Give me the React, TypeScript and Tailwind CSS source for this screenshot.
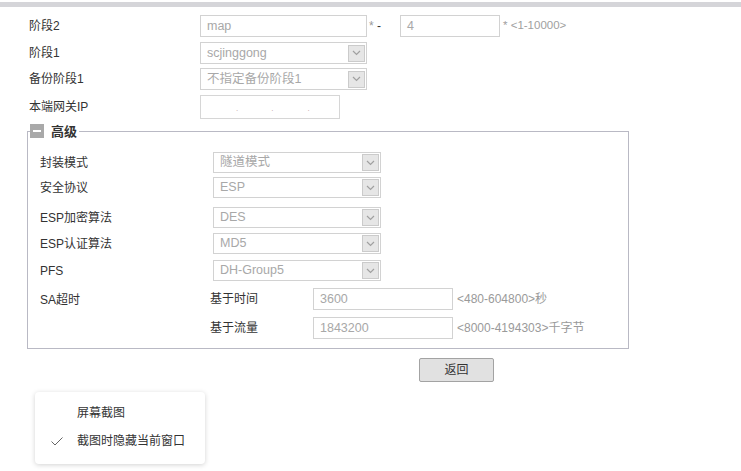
import React from "react";

const Chevron = () => (
  <svg width="9" height="6" viewBox="0 0 9 6" fill="none">
    <polyline points="1,1 4.5,4.5 8,1" stroke="#a0a0a0" strokeWidth="1.2" />
  </svg>
);

function Select({ value, w, h }: { value: string; w: string; h: string }) {
  return (
    <div className={`${w} ${h} border border-[#d2d2d2] bg-white flex items-center justify-between pl-[6px] pr-[1px]`}>
      <span className="text-[12.5px] text-[#a8a8a8] leading-none">{value}</span>
      <div className="w-[17px] h-[17px] bg-[#e6e6e6] border border-[#cbcbcb] flex items-center justify-center">
        <Chevron />
      </div>
    </div>
  );
}

function Input({ value, w, h }: { value: string; w: string; h: string }) {
  return (
    <div className={`${w} ${h} border border-[#d2d2d2] bg-white flex items-center pl-[6px]`}>
      <span className="text-[12.5px] text-[#a8a8a8] leading-none">{value}</span>
    </div>
  );
}

function TopRow({ label, children, mt, h }: { label: string; children: React.ReactNode; mt: string; h: string }) {
  return (
    <div className={`flex items-center ${mt} ${h}`}>
      <div className="w-[200px] pl-[29px] text-[12px] text-[#333]">{label}</div>
      {children}
    </div>
  );
}

function InnerRow({ label, value, mt }: { label: string; value: string; mt: string }) {
  return (
    <div className={`flex items-center ${mt} h-[21px]`}>
      <div className="w-[185px] pl-[12px] text-[12px] text-[#333]">{label}</div>
      <Select value={value} w="w-[168px]" h="h-[21px]" />
    </div>
  );
}

export default function App() {
  return (
    <div className="relative w-[741px] h-[471px] overflow-hidden bg-white font-['Liberation_Sans','Noto_Sans_CJK_SC',sans-serif]">
      <div className="mt-[2px] h-[5px] w-[741px] bg-[#d5d5d9]" />

      <TopRow label="阶段2" mt="mt-[8px]" h="h-[22px]">
        <Input value="map" w="w-[167px]" h="h-[22px]" />
        <div className="w-[33px] text-[12px] pl-[2px] self-start mt-[5px] leading-none">
          <span className="text-[#9a9a9a]">*</span>
          <span className="text-[#333]"> -</span>
        </div>
        <Input value="4" w="w-[100px]" h="h-[22px]" />
        <div className="pl-[3px] text-[11.5px] text-[#a0a0a0] self-start mt-[5px] leading-none">* &lt;1-10000&gt;</div>
      </TopRow>

      <TopRow label="阶段1" mt="mt-[5px]" h="h-[22px]">
        <Select value="scjinggong" w="w-[167px]" h="h-[22px]" />
      </TopRow>

      <TopRow label="备份阶段1" mt="mt-[4px]" h="h-[22px]">
        <Select value="不指定备份阶段1" w="w-[167px]" h="h-[22px]" />
      </TopRow>

      <TopRow label="本端网关IP" mt="mt-[5px]" h="h-[24px]">
        <div className="w-[140px] h-[24px] border border-[#d6d6d6] bg-white flex items-end pb-[5px]">
          <div className="w-[35px]" />
          <span className="text-[#c0a0a0] text-[8px] leading-none">.</span>
          <div className="w-[33px]" />
          <span className="text-[#c0a0a0] text-[8px] leading-none">.</span>
          <div className="w-[34px]" />
          <span className="text-[#c0a0a0] text-[8px] leading-none">.</span>
        </div>
      </TopRow>

      <fieldset className="mt-[4px] ml-[27px] w-[602px] border border-[#b9b9c4] pb-[9px]">
        <legend className="ml-[2px] h-[16px] flex items-center pr-[2px]">
          <span className="w-[14px] h-[14px] bg-[#a9a9a9] flex items-center justify-center">
            <span className="w-[8px] h-[2px] bg-white" />
          </span>
          <span className="ml-[7px] text-[13px] font-bold text-[#333] leading-none">高级</span>
        </legend>

        <InnerRow label="封装模式" value="隧道模式" mt="mt-[13px]" />
        <InnerRow label="安全协议" value="ESP" mt="mt-[4px]" />
        <InnerRow label="ESP加密算法" value="DES" mt="mt-[9px]" />
        <InnerRow label="ESP认证算法" value="MD5" mt="mt-[5px]" />
        <InnerRow label="PFS" value="DH-Group5" mt="mt-[6px]" />

        <div className="flex mt-[7px]">
          <div className="w-[182px] pl-[12px] text-[12px] text-[#333] mt-[3px]">SA超时</div>
          <div className="flex flex-col">
            <div className="flex items-center h-[22px]">
              <div className="w-[103px] text-[12px] text-[#333]">基于时间</div>
              <Input value="3600" w="w-[140px]" h="h-[22px]" />
              <div className="pl-[4px] text-[12px] text-[#9a9a9a] self-start mt-[2px]">&lt;480-604800&gt;秒</div>
            </div>
            <div className="flex items-center h-[22px] mt-[7px]">
              <div className="w-[103px] text-[12px] text-[#333]">基于流量</div>
              <Input value="1843200" w="w-[140px]" h="h-[22px]" />
              <div className="pl-[4px] text-[12px] text-[#9a9a9a] self-start mt-[2px]">&lt;8000-4194303&gt;千字节</div>
            </div>
          </div>
        </div>
      </fieldset>

      <div className="mt-[9px] ml-[419px] w-[75px] h-[24px] bg-[#e1e1e1] border border-[#a3a3a3] rounded-[2px] flex items-center justify-center text-[12px] text-[#333]">
        返回
      </div>

      <div className="absolute left-[35px] top-[392px] w-[170px] h-[72px] rounded-[4px] bg-white shadow-[0_1px_5px_rgba(0,0,0,0.18)] text-[12px] text-[#333]">
        <div className="flex items-center h-[14px] mt-[14px]">
          <span className="ml-[42px]">屏幕截图</span>
        </div>
        <div className="flex items-center h-[14px] mt-[14px]">
          <svg className="ml-[16px]" width="12" height="9" viewBox="0 0 12 9" fill="none">
            <polyline points="0.5,4.5 4,8 11.5,0.5" stroke="#666" strokeWidth="1" />
          </svg>
          <span className="ml-[14px]">截图时隐藏当前窗口</span>
        </div>
      </div>
    </div>
  );
}
